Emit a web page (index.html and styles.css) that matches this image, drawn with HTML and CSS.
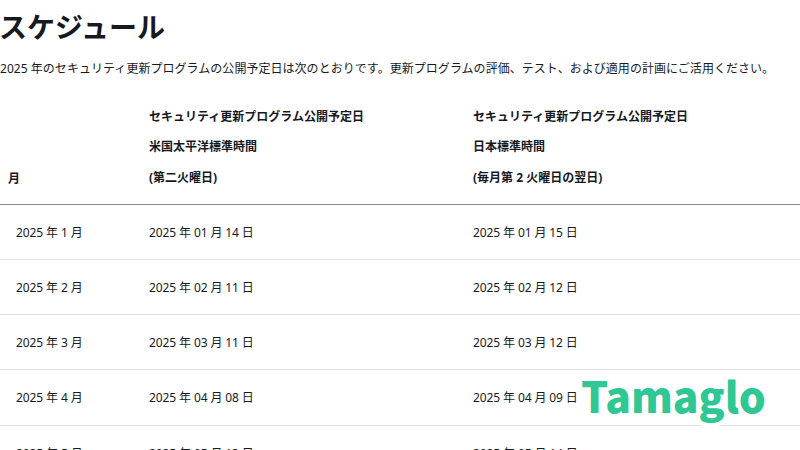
FILE: index.html
```html
<!DOCTYPE html>
<html lang="ja">
<head>
<meta charset="utf-8">
<title>スケジュール</title>
<link rel="stylesheet" href="styles.css">
</head>
<body>
<main class="page">
<h1 class="title">スケジュール</h1>
<p class="intro">2025 年のセキュリティ更新プログラムの公開予定日は次のとおりです。更新プログラムの評価、テスト、および適用の計画にご活用ください。</p>
<table class="schedule">
<thead>
<tr>
<th class="month-head">月</th>
<th><p>セキュリティ更新プログラム公開予定日</p><p>米国太平洋標準時間</p><p>(第二火曜日)</p></th>
<th><p>セキュリティ更新プログラム公開予定日</p><p>日本標準時間</p><p>(毎月第 2 火曜日の翌日)</p></th>
</tr>
</thead>
<tbody>
<tr><td class="month">2025 年 1 月</td><td>2025 年 01 月 14 日</td><td>2025 年 01 月 15 日</td></tr>
<tr><td class="month">2025 年 2 月</td><td>2025 年 02 月 11 日</td><td>2025 年 02 月 12 日</td></tr>
<tr><td class="month">2025 年 3 月</td><td>2025 年 03 月 11 日</td><td>2025 年 03 月 12 日</td></tr>
<tr><td class="month">2025 年 4 月</td><td>2025 年 04 月 08 日</td><td>2025 年 04 月 09 日</td></tr>
<tr><td class="month">2025 年 5 月</td><td>2025 年 05 月 13 日</td><td>2025 年 05 月 14 日</td></tr>
</tbody>
</table>
</main>
<div class="logo">Tamaglo</div>
</body>
</html>
```
FILE: styles.css
```css
html, body {
  margin: 0;
  padding: 0;
  height: 450px;
  overflow: hidden;
  background: #fff;
}
body {
  font-family: "Noto Sans", "Noto Sans CJK JP", sans-serif;
  color: #16191f;
  font-size: 12px;
}
.title {
  margin: 0 0 0 -1px;
  padding-top: 7px;
  font-size: 28px;
  line-height: 40px;
  font-weight: 700;
}
.intro {
  margin: 0;
  padding-top: 13px;
  line-height: 18px;
  white-space: nowrap;
  letter-spacing: 0.04px;
}
.schedule {
  border-collapse: collapse;
  table-layout: fixed;
  width: 800px;
  margin-top: 17px;
}
.schedule th {
  text-align: left;
  vertical-align: bottom;
  font-weight: 700;
  padding: 0 0 17px;
  border-bottom: 1px solid #8a8a8a;
}
.schedule th:nth-child(1) { width: 149px; padding-left: 8px; box-sizing: border-box; }
.schedule th:nth-child(2) { width: 324px; box-sizing: border-box; }
.schedule th p {
  margin: 12.5px 0 0;
  line-height: 18px;
}
.schedule td {
  height: 54.25px;
  padding: 0;
  border-bottom: 1px solid #e1e1e1;
  letter-spacing: -0.11px;
}
.schedule td.month { padding-left: 16px; }
.logo {
  position: absolute;
  left: 581px;
  top: 367px;
  font-family: "Noto Sans CJK JP", "Noto Sans", sans-serif;
  font-size: 42.5px;
  line-height: 56px;
  font-weight: 900;
  color: #2fc793;
  -webkit-text-stroke: 8px #fff;
  paint-order: stroke fill;
}
```
